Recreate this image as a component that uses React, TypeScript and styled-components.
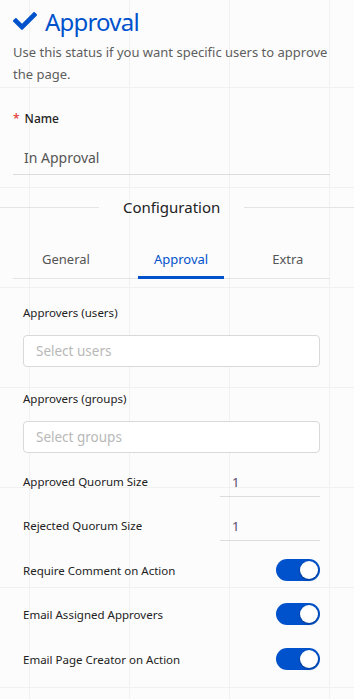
import React from "react";
import styled, { createGlobalStyle } from "styled-components";
import { FaCheck } from "react-icons/fa";

const GlobalStyle = createGlobalStyle`
  html, body {
    margin: 0;
    padding: 0;
  }
  body {
    font-family: "Noto Sans", "Open Sans", sans-serif;
    background-color: #fcfcfc;
    background-image:
      linear-gradient(to right, #f1f1f1 1px, transparent 1px),
      linear-gradient(to bottom, #f1f1f1 1px, transparent 1px);
    background-size: 100px 100px;
    background-position: 29px 87px;
    min-height: 699px;
  }
`;

const Page = styled.div`
  width: 354px;
`;

const Section = styled.div`
  padding: 0 24px 0 13px;
`;

const TitleRow = styled.h1`
  display: flex;
  align-items: center;
  gap: 8px;
  margin: 0;
  padding-top: 4px;
  height: 34px;
  color: #0052cc;
  font-size: 24px;
  font-weight: 400;
  letter-spacing: -0.8px;
`;

const Description = styled.p`
  margin: 3px 0 0;
  font-size: 13px;
  line-height: 22px;
  color: #5e5e5e;
`;

const FieldLabel = styled.label`
  display: block;
  margin-top: 26px;
  font-size: 12px;
  font-weight: 500;
  color: #222;
  line-height: 16px;
`;

const Required = styled.span`
  color: #e53935;
  margin-right: 5px;
`;

const NameInput = styled.div`
  margin-top: 16px;
  height: 32px;
  padding: 0 11px 2px;
  border-bottom: 1px solid #dcdcdc;
  display: flex;
  align-items: center;
  font-size: 14px;
  color: #555;
  box-sizing: border-box;
`;

const Divider = styled.div`
  display: flex;
  align-items: center;
  margin-top: 22px;
  height: 20px;
  &::before,
  &::after {
    content: "";
    flex: 1;
    border-top: 1px solid #e4e4e4;
  }
  &::before {
    max-width: 99px;
  }
`;

const DividerText = styled.span`
  padding: 0 24px;
  font-size: 15px;
  color: #222;
`;

const Tabs = styled.div`
  display: flex;
  gap: 32px;
  margin-top: 24px;
  padding-left: 13px;
  border-bottom: 1px solid #e4e4e4;
`;

const Tab = styled.div<{ $active?: boolean }>`
  padding: 0 16px;
  height: 38px;
  display: flex;
  align-items: center;
  font-size: 13px;
  color: ${(p) => (p.$active ? "#0052cc" : "#555")};
  border-bottom: 3px solid ${(p) => (p.$active ? "#0052cc" : "transparent")};
  margin-bottom: -1px;
  box-sizing: border-box;
`;

const Panel = styled.div`
  padding: 0 10px;
`;

const PanelLabel = styled.div<{ $top: number }>`
  margin-top: ${(p) => p.$top}px;
  font-size: 11.5px;
  color: #222;
  line-height: 16px;
`;

const SelectBox = styled.div`
  margin-top: 14px;
  height: 32px;
  border: 1px solid #d9d9d9;
  border-radius: 4px;
  background: #fff;
  box-sizing: border-box;
  display: flex;
  align-items: center;
  padding: 0 12px;
  font-size: 13.5px;
  color: #b8b8b8;
`;

const Row = styled.div<{ $top: number }>`
  display: flex;
  align-items: center;
  justify-content: space-between;
  margin-top: ${(p) => p.$top}px;
  height: 24px;
  font-size: 11.5px;
  color: #222;
`;

const QuorumRow = styled.div<{ $top: number }>`
  display: flex;
  align-items: flex-start;
  justify-content: space-between;
  margin-top: ${(p) => p.$top}px;
  font-size: 11.5px;
  color: #222;
`;

const QuorumLabel = styled.span`
  line-height: 22px;
`;

const QuorumInput = styled.div`
  width: 100px;
  height: 26px;
  border-bottom: 1px solid #dcdcdc;
  padding-left: 12px;
  box-sizing: border-box;
  font-size: 13px;
  color: #5a4a6a;
  line-height: 22px;
`;

const Switch = styled.div<{ $on?: boolean }>`
  width: 44px;
  height: 22px;
  border-radius: 11px;
  background: ${(p) => (p.$on ? "#0052cc" : "#ccc")};
  position: relative;
  flex-shrink: 0;
  &::after {
    content: "";
    position: absolute;
    top: 2px;
    left: ${(p) => (p.$on ? "24px" : "2px")};
    width: 18px;
    height: 18px;
    border-radius: 50%;
    background: #fff;
    box-shadow: 0 1px 3px rgba(0, 0, 0, 0.3);
  }
`;

const toggles = [
  { label: "Require Comment on Action", top: 17 },
  { label: "Email Assigned Approvers", top: 20 },
  { label: "Email Page Creator on Action", top: 21 },
];

export default function App() {
  return (
    <Page>
      <GlobalStyle />
      <Section>
        <TitleRow>
          <FaCheck size={24} />
          Approval
        </TitleRow>
        <Description>
          Use this status if you want specific users to approve the page.
        </Description>
        <FieldLabel>
          <Required>*</Required>Name
        </FieldLabel>
        <NameInput>In Approval</NameInput>
      </Section>
      <Divider>
        <DividerText>Configuration</DividerText>
      </Divider>
      <Section>
        <Tabs>
          <Tab>General</Tab>
          <Tab $active>Approval</Tab>
          <Tab>Extra</Tab>
        </Tabs>
        <Panel>
          <PanelLabel $top={26}>Approvers (users)</PanelLabel>
          <SelectBox>Select users</SelectBox>
          <PanelLabel $top={24}>Approvers (groups)</PanelLabel>
          <SelectBox>Select groups</SelectBox>
          <QuorumRow $top={18}>
            <QuorumLabel>Approved Quorum Size</QuorumLabel>
            <QuorumInput>1</QuorumInput>
          </QuorumRow>
          <QuorumRow $top={18}>
            <QuorumLabel>Rejected Quorum Size</QuorumLabel>
            <QuorumInput>1</QuorumInput>
          </QuorumRow>
          {toggles.map((t) => (
            <Row key={t.label} $top={t.top}>
              <span>{t.label}</span>
              <Switch $on />
            </Row>
          ))}
        </Panel>
      </Section>
    </Page>
  );
}
